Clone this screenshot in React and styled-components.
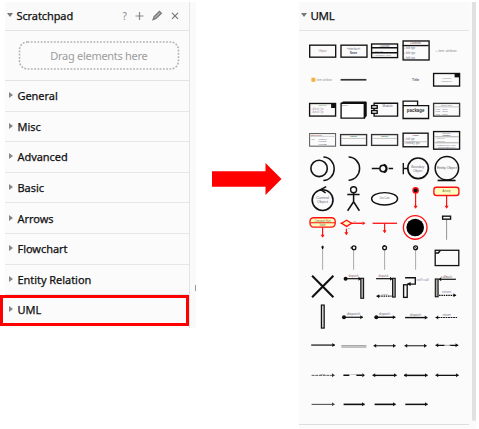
import React from 'react';
import styled, { createGlobalStyle } from 'styled-components';

const GlobalStyle = createGlobalStyle`
  * { box-sizing: border-box; }
  body { margin: 0; background: #fff; overflow: hidden; }
`;

const Page = styled.main`
  width: 479px;
  height: 429px;
  display: flex;
  align-items: flex-start;
  padding-top: 2px;
  font-family: 'Noto Sans', 'Open Sans', sans-serif;
  font-size: 11px;
  color: #111;
`;

const Sidebar = styled.aside`
  position: relative;
  width: 191px;
  height: 326px;
  margin-left: 5px;
  padding-right: 6px;
  background: #fafafa;
  flex: none;
`;

const SidebarInner = styled.div`
  width: 185px;
  height: 326px;
  background: #fbfbfb;
  border-right: 1px solid #e3e3e3;
`;

const Header = styled.header`
  display: flex;
  align-items: center;
  height: 29px;
  padding-bottom: 1px;
  border-bottom: 1px solid #e3e3e3;
  background: #fafafa;
`;

const Caret = styled.i`
  width: 0;
  height: 0;
  margin: ${(p) => (p.$open ? '-1px 4px 0 1.5px' : '-2px 5px 0 3.5px')};
  border-style: solid;
  border-width: ${(p) => (p.$open ? '4px 3.5px 0' : '3.5px 0 3.5px 4px')};
  border-color: ${(p) => (p.$open ? '#777 transparent transparent' : 'transparent transparent transparent #858585')};
`;

const Label = styled.span`
  letter-spacing: ${(p) => p.$spacing || '-0.05px'};
  font-size: ${(p) => p.$size || '11px'};
  -webkit-text-stroke: 0.25px #111;
  line-height: 14px;
  white-space: nowrap;
`;

const Tools = styled.svg`
  width: 64px;
  height: 14px;
  margin-left: auto;
  margin-right: 10px;
  fill: none;
  stroke: #777;
  stroke-width: 1.2;
`;

const DropArea = styled.div`
  height: 50px;
  padding: 10px 10px 10px 13px;
  border-bottom: 1px solid #e3e3e3;
`;

const DropZone = styled.svg`
  display: block;
  width: 162px;
  height: 29px;
`;

const Row = styled.div`
  display: flex;
  align-items: center;
  height: 30.6px;
  padding-top: 1px;
  border-bottom: 1px solid #e6e6e6;
`;

const Highlight = styled.div`
  position: absolute;
  left: -5px;
  top: 293px;
  width: 189px;
  height: 31px;
  border: 3px solid #fe0000;
`;

const Handle = styled.div`
  position: absolute;
  right: 0;
  top: 283px;
  width: 1px;
  height: 6px;
  background: #999;
`;

const Arrow = styled.svg`
  width: 70px;
  height: 34px;
  margin: 160px 0 0 16px;
  flex: none;
`;

const Palette = styled.section`
  display: flex;
  width: 177px;
  height: 427px;
  margin-left: 17px;
  background: #fbfbfb;
  flex: none;
`;

const PaletteMain = styled.div`
  width: 170px;
  height: 423px;
  border-bottom: 1px solid #dedede;
`;

const Scrollbar = styled.div`
  width: 4px;
  height: 419px;
  margin-left: 3px;
  background: #e1e1e1;
  border-radius: 0 0 2px 2px;
`;

const ShapeGrid = styled.div`
  display: grid;
  grid-template-columns: repeat(5, 31.2px);
  grid-auto-rows: 29.55px;
  padding: 4.9px 0 0 7.6px;
`;

const Cell = styled.svg`
  width: 31.2px;
  height: 29.55px;
  overflow: visible;
  fill: none;
  stroke: #111;
  stroke-width: 1.35;
  text {
    stroke: none;
    font-family: 'Liberation Sans', sans-serif;
  }
`;

function T({ x = 0, y, s = 3, w, c = '#667', children, b, a = 'middle' }) {
  return (
    <text x={x} y={y} fontSize={s} fill={c} fontWeight={b ? 700 : 400} textAnchor={a}
      textLength={w} lengthAdjust="spacingAndGlyphs">{children}</text>
  );
}

const Box = ({ x = -13, y = -6, w = 26, h = 12, ...rest }) => (
  <rect x={x} y={y} width={w} height={h} {...rest} />
);

function Line({ x1, x2, y = 0, start, end, c = '#111', sw = 1.2, dash }) {
  const head = (x, d) => <path d={`M${x} ${y}l${-2.6 * d}-2v4z`} fill={c} stroke="none" />;
  const mark = (kind, x, d) => (kind === 'dot' ? <circle cx={x} cy={y} r="2" fill={c} stroke="none" /> : kind ? head(x, d) : null);
  return (
    <g>
      <path d={`M${x1} ${y}H${x2}`} stroke={c} strokeWidth={sw} strokeDasharray={dash} />
      {mark(start, x1, -1)}
      {mark(end, x2, 1)}
    </g>
  );
}

const Down = ({ x = 0, y1, y2 }) => (
  <g>
    <path d={`M${x} ${y1}V${y2 - 1}`} stroke="#f11" strokeWidth="1.2" />
    <path d={`M${x - 2} ${y2 - 3}h4l-2 3z`} fill="#f11" stroke="none" />
  </g>
);

const Lifeline = ({ children }) => (
  <>
    <path d="M0-8V12" stroke="#aaa" strokeWidth="1" />
    {children}
  </>
);

const shapes = [
  // classes and notes
  <><Box x={-12.9} y={-5.6} /><T y={1} w={8} c="#977">Object</T></>,
  <><Box x={-12.6} y={-5.6} /><T y={-0.6} s={2.8} w={13}>«interface»</T><T y={3} b w={7} c="#446">Name</T></>,
  <><Box y={-6.8} h={13.6} /><path d="M-13-3H13M-13 2H13" strokeWidth="1.6" /><T y={-4} s={2.6} w={10}>Classname</T><T x={-11.5} y={0.8} s={2.5} a="start" w={10}>+ field: type</T><T x={-11.5} y={5.5} s={2.5} a="start" w={18}>+ method(): type</T></>,
  <><Box y={-9.8} x={-12.5} h={19} /><path d="M-13-5.2H13" /><T y={-6.4} s={3} w={11} c="#744">Classname</T><T x={-11.5} y={-1.5} a="start" w={11}>+ field: type</T><T x={-11.5} y={3.2} a="start" w={11}>+ field: type</T><T x={-11.5} y={7.8} a="start" w={11}>+ field: type</T></>,
  <T y={0.9} x={-0.5} w={21} c="#888">+ item: attribute</T>,

  <><rect x="-11.2" y="-2" width="4" height="4" fill="#f3b33d" stroke="none" /><T y={0.9} x={1.7} w={15} c="#888">item: attribute</T></>,
  <path d="M-13 0H12.8" stroke="#333" strokeWidth="1.7" />,
  null,
  <T y={1.5} s={4} w={7.5} c="#224">Title</T>,
  <><Box y={-6.3} h={12.6} /><path d="M8-6h4.6v3.6H8z" fill="#111" stroke="none" /><T y={-1.2} s={2.3} w={10}>«Annotation»</T><T y={2.5} s={2.3} w={10}>Component</T></>,

  <><Box y={-6.3} h={12.6} /><path d="M8.5-5.8h4.2v4H8.5z" fill="#111" stroke="none" /><T y={-3.7} s={2.3} w={8} c="#484">Component</T><T x={-11} y={0} s={2.6} a="start" w={12} c="#a9899b">+ Attribute1: Type</T><T x={-11} y={3.1} s={2.6} a="start" w={12} c="#a9899b">+ Attribute2: Type</T></>,
  <><path d="M-12.5-6.4H10.8V8.3H-12.5z" fill="#fff" /><path d="M-12.5-6.4l2-1.4H12.6V6.5l-1.8 1.8V-6.4z" fill="#111" strokeWidth="1" /><T x={-9} y={-3.3} s={2.5}>Block</T></>,
  <><path d="M-10.5-5.8V-6.5H13V6.4H-10.5z" /><rect x="-13" y="-4.2" width="5.6" height="2.8" fill="#fff" /><rect x="-13" y="0.8" width="5.6" height="2.8" fill="#fff" /><T x={3} y={-2.4} s={3} w={10}>Module</T></>,
  <><path d="M-12.5-4.2V-8.7H2V-4.2M-12.5-4.2H13V8.7H-12.5z" /><T y={2.4} s={5} b w={17.5} c="#333">package</T></>,
  <><Box y={-6.4} h={12.8} stroke="#333" /><path d="M-13-2.9H13" stroke="#aaa" strokeWidth=".7" /><T y={-4} s={2.3} w={11}>Object:Type</T><T x={-11} y={-.2} s={2.5} a="start" w={12}>field1 = value1</T><T x={-11} y={2.4} s={2.5} a="start" w={12}>field2 = value2</T><T x={-11} y={5} s={2.5} a="start" w={12}>field3 = value3</T></>,

  <><Box y={-6.2} h={12.6} stroke="#555" strokeWidth="1" /><path d="M-13-3.4H13" stroke="#bbb" strokeWidth=".7" /><T x={-12} y={-4} s={2.4} a="start" c="#944">Tablename</T><T x={-11} y={-.2} s={2.5} a="start">PK</T><T x={0} y={-.2} s={2.5} w={8}>uniqueId</T><T x={0} y={2.5} s={2.5} w={8}>row1</T><T x={0} y={5} s={2.5} w={8}>row2</T></>,
  <><Box y={-5.2} h={10.8} stroke="#333" /><path d="M-12-1.3H12" stroke="#bbb" strokeWidth=".8" /><T y={-2.6} s={2.5} b w={7} c="#373">Object</T></>,
  <><Box y={-5.2} h={10.8} stroke="#333" /><path d="M-12-1.3H12" stroke="#bbb" strokeWidth=".8" /><T y={-2.6} s={2.5} b w={7} c="#373">Object</T></>,
  <><Box y={-6.6} h={13.6} x={-12.5} w={25} /><path d="M-12 2H12" stroke="#aaa" strokeWidth=".7" /><T y={-3.7} s={2.5} b w={6} c="#744">Class</T><T x={-11} y={-.2} s={2.7} a="start" w={10}>+ field: type</T><T x={-11} y={4.7} s={2.7} a="start" w={15}>+ method(): type</T></>,
  <><Box y={-8.2} h={17.6} /><path d="M-12-3H12M-12 3H12" stroke="#888" strokeWidth=".7" /><T y={-5.8} s={2.2} w={10}>«interface»</T><T y={-3.5} s={2.4} b w={8}>Name</T><T x={-11} y={-.5} s={2.5} a="start" w={9}>+ field1: Type</T><T x={-11} y={2} s={2.5} a="start" w={9}>+ field2: Type</T><T x={-11} y={5.8} s={2.4} a="start" w={20}>+ method1(Type): Type</T><T x={-11} y={8.2} s={2.4} a="start" w={20}>+ method2(Type)</T></>,

  // interfaces and analysis objects
  <><circle cx="-3.5" cy="-.3" r="8.2" strokeWidth="1.6" /><path d="M.8-11.8a10.8 11.8 0 0 1 0 23.6" strokeWidth="1.5" /></>,
  <path d="M-5-11.8a11 11.6 0 0 1 0 23.2" strokeWidth="1.5" />,
  <><path d="M-12.8-.3H-5M4-.3H8.5" /><circle cx="-1.5" cy="-.3" r="3.2" strokeWidth="1.5" /><path d="M-1-4.2a4 4 0 0 1 0 7.8" strokeWidth="1.8" /></>,
  <><path d="M-12.3-5.8V5.5M-12.3-.3H-8" /><circle cx="2.5" cy="-.5" r="10.3" strokeWidth="1.7" /><T x={2.2} y={-1} s={3.6} w={13}>Boundary</T><T x={2.2} y={2.8} s={3.6} w={9}>Object</T></>,
  <><circle cx=".3" cy="-.5" r="11.7" strokeWidth="1.5" /><path d="M-9 11.7H9" strokeWidth="1.6" /><T x={.3} y={.5} s={4} w={20} c="#556">Entity Object</T></>,

  <><circle cy="1.3" r="10.4" strokeWidth="1.6" /><path d="M3.6-12.2L-2-9.1 3-5.8" strokeWidth="1.5" /><T y={.2} s={4} w={13}>Control</T><T y={4.4} s={4} w={11}>Object</T></>,
  <><circle cy="-9" r="3" /><path d="M0-6V3M-6.3-4.3H6M0 3L-6 12M0 3l5.8 9" strokeWidth="1.5" /></>,
  <><ellipse rx="13" ry="6.2" fill="#fff" strokeWidth="1.4" /><T y={.7} s={3} w={10}>Use Case</T></>,
  <><Down y1={-6} y2={10} /><circle cy="-8.4" r="2.6" fill="#111" stroke="#f11" /></>,
  <><rect x="-12.7" y="-11.5" width="25" height="8.2" rx="2.5" fill="#ffffc0" stroke="#f11" /><T y={-6.8} s={3} w={8} c="#663">Activity</T><Down y1={-3.3} y2={10} /></>,

  // activity and state elements
  <><rect x="-12.6" y="-10" width="25.2" height="9.3" rx="3.5" fill="#ffffc0" stroke="#f11" /><path d="M-12.5-5H12.5" stroke="#f11" strokeWidth="1" /><T y={-6.2} s={2.8} w={16} c="#663">Composite State</T><T y={-2} s={2.6} w={6} c="#663">Subtitle</T><Down y1={-.5} y2={10} /></>,
  <><path d="M-13-4.5H9" stroke="#f11" /><path d="M-12-4.5L-7-7.6-2-4.5-7-1.4z" fill="#ffffc0" stroke="#f11" /><path d="M12-4.5l-3-1.8v3.6z" fill="#f11" stroke="none" /><T x={1} y={-5.3} s={2}>no</T><T x={-5} y={1} s={2}>yes</T><Down x={-7.2} y1={1} y2={7.5} /></>,
  <><path d="M-12-4.5H12.5" stroke="#f11" strokeWidth="1.3" /><Down y1={-4.5} y2={5.5} /></>,
  <><circle cx="-.4" cy="-.3" r="11.8" stroke="#f11" /><circle cx="-.4" cy="-.3" r="8.8" fill="#000" stroke="none" /></>,
  <><path d="M0-8.5V12" stroke="#888" strokeWidth=".9" /><rect x="-4" y="-11.6" width="8" height="3" fill="#fff" /><T y={-9.2} s={2.2}>Object</T></>,

  <Lifeline><path d="M0-12V-8.5M-1.2-10.7H1.2" /></Lifeline>,
  <Lifeline><circle cx=".4" cy="-10" r="1.9" /><path d="M-2.4-11v2" strokeWidth="1" /></Lifeline>,
  <Lifeline><circle cy="-10" r="1.9" /><path d="M-1.2-11.4L.5-12.3" /></Lifeline>,
  <Lifeline><circle cy="-10" r="1.9" /><path d="M-1.3-11.3L1.3-8.7" strokeWidth=".8" /></Lifeline>,
  <><Box x={-11.4} y={-7.5} w={23.6} h={15.3} strokeWidth="1.3" /><path d="M-11.4-4.8h3.2l2-2.7" fill="#ddd" /></>,

  <path d="M-10.5-11L10.8 10.4M10.8-11L-10.5 10.4" strokeWidth="2.1" />,
  <><rect x="7.2" y="-8.5" width="2.8" height="20" fill="#aaa" strokeWidth="1.1" /><Line x1={-8} x2={7.5} y={-8.1} start="dot" end="arrow" /><T y={-10.1} s={2.8} w={10} c="#866">dispatch</T></>,
  <><rect x="8" y="-8.5" width="2.6" height="18.8" fill="#aaa" strokeWidth="1.1" /><Line x1={-8.5} x2={8} y={-8.1} end="arrow" /><T x={-1} y={-10.1} s={2.8} w={10} c="#866">dispatch</T><Line x1={-8} x2={7} y={9.4} start="arrow" dash="1.5 .8" /><T y={8} s={2.5} w={6}>return</T></>,
  <><rect x="-12" y="-2" width="3.6" height="12.6" /><path d="M-10.5-9H-.3V-2.7H-8" /><path d="M-9-2.7l4-2v4z" fill="#111" stroke="none" /><T x={7} y={-5.8} s={3} w={12} c="#78a">self call</T></>,
  <><rect x="-11.3" y="-7.8" width="2.8" height="17.8" fill="#aaa" strokeWidth="1.1" /><Line x1={-8} x2={9.3} y={-7.5} start="arrow" /><T x={0} y={-9.2} s={2.8} w={11} c="#866">callback</T><Line x1={-7.5} x2={9.5} y={8.6} end="arrow" dash="1.5 .8" /><T y={6.5} s={2.8} w={9} c="#779">return</T></>,

  // messages and connectors
  <rect x="-1.2" y="-11.7" width="2.8" height="23" fill="#ccc" strokeWidth="1.2" />,
  <><Line x1={-9.6} x2={9.3} y={.5} start="dot" end="arrow" /><T y={-1.4} s={2.8} w={13}>dispatch</T></>,
  <><Line x1={-8.3} x2={10.8} y={.5} start="dot" end="arrow" sw={1.4} /><T y={-1.4} s={2.8} w={11}>dispatch</T></>,
  <><Line x1={-10.5} x2={11.8} y={.8} end="arrow" sw={1.4} /><T y={-.7} s={2.8} w={11}>dispatch</T></>,
  <><Line x1={-11} x2={10.5} y={.7} start="arrow" dash="1.8 .7" sw={1.1} /><T y={-1.1} s={2.8} w={8}>return</T></>,

  <Line x1={-11.4} x2={12.3} y={-.7} end="arrow" />,
  <><path d="M-12.3 .1H12.8" stroke="#777" strokeWidth="1" /><path d="M-12.3 1.6H12.8" stroke="#999" strokeWidth=".7" /></>,
  <Line x1={-11} x2={11} start="arrow" end="arrow" sw={1} />,
  <Line x1={-11} x2={11} start="arrow" end="arrow" sw={1} />,
  <><Line x1={-11} x2={11.6} y={-.4} start="arrow" end="arrow" dash="9 5" sw={1.3} /><path d="M-2-.4H4" stroke="#999" strokeWidth=".8" /></>,

  <><Line x1={-11} x2={12} y={-.4} end="arrow" c="#333" dash="3 .7" sw={.8} /><T y={-.6} s={2.4} w={5}>use</T></>,
  <><Line x1={-10.2} x2={11.3} y={-.4} end="arrow" dash="6 7" sw={1.5} /><T y={-.3} s={2.4} w={6}>Extends</T></>,
  <Line x1={-12} x2={12} y={-.4} start="arrow" end="arrow" sw={1.4} />,
  <Line x1={-11.6} x2={12} y={-.4} start="arrow" end="arrow" sw={1.5} />,
  <Line x1={-11} x2={12} y={-.4} start="arrow" end="arrow" sw={1.3} />,

  <Line x1={-11} x2={12} y={-.4} end="arrow" c="#444" sw={1} />,
  <Line x1={-10} x2={11} y={-.4} end="arrow" sw={1.6} />,
  <Line x1={-10} x2={11} y={-.4} end="arrow" sw={1.6} />,
  <Line x1={-10.3} x2={12} y={-.4} end="arrow" sw={1.5} />,
];

const sections = ['General', 'Misc', 'Advanced', 'Basic', 'Arrows', 'Flowchart', 'Entity Relation', 'UML'];

export default function App() {
  return (
    <>
      <GlobalStyle />
      <Page>
        <Sidebar>
          <SidebarInner>
            <Header>
              <Caret $open />
              <Label $spacing="-0.1px">Scratchpad</Label>
              <Tools viewBox="0 0 64 14">
                <text x="7.5" y="10.7" fontSize="10" fill="#888" stroke="none">?</text>
                <path d="M20.5 7h8M24.5 3v8" stroke="#888" />
                <path d="M38 10.7l1.1-3 5.4-5.4 1.9 1.9-5.4 5.4z" fill="#aaa" />
                <path d="M57 3.8l6 6M63 3.8l-6 6" />
              </Tools>
            </Header>
            <DropArea>
              <DropZone viewBox="0 0 162 29">
                <rect x="1.5" y="1" width="159" height="27" rx="8" fill="none" stroke="#b3b3b3" strokeWidth="1.6" strokeDasharray="1.8 1.5" />
                <text x="32.3" y="18.8" fontSize="11" fill="#9d9d9d" textLength="97.5">Drag elements here</text>
              </DropZone>
            </DropArea>
            {sections.map((name) => (
              <Row key={name}>
                <Caret />
                <Label>{name}</Label>
              </Row>
            ))}
          </SidebarInner>
          <Highlight />
          <Handle />
        </Sidebar>
        <Arrow viewBox="0 0 70 34">
          <path d="M0 9.3H53.5V1L69.5 17 53.5 33V24.7H0z" fill="#fe0000" />
        </Arrow>
        <Palette>
          <PaletteMain>
            <Header>
              <Caret $open />
              <Label $size="11.5px" $spacing="-0.35px">UML</Label>
            </Header>
            <ShapeGrid>
              {shapes.map((shape, i) => (
                <Cell key={i} viewBox="-15.6 -14.775 31.2 29.55">{shape}</Cell>
              ))}
            </ShapeGrid>
          </PaletteMain>
          <Scrollbar />
        </Palette>
      </Page>
    </>
  );
}
